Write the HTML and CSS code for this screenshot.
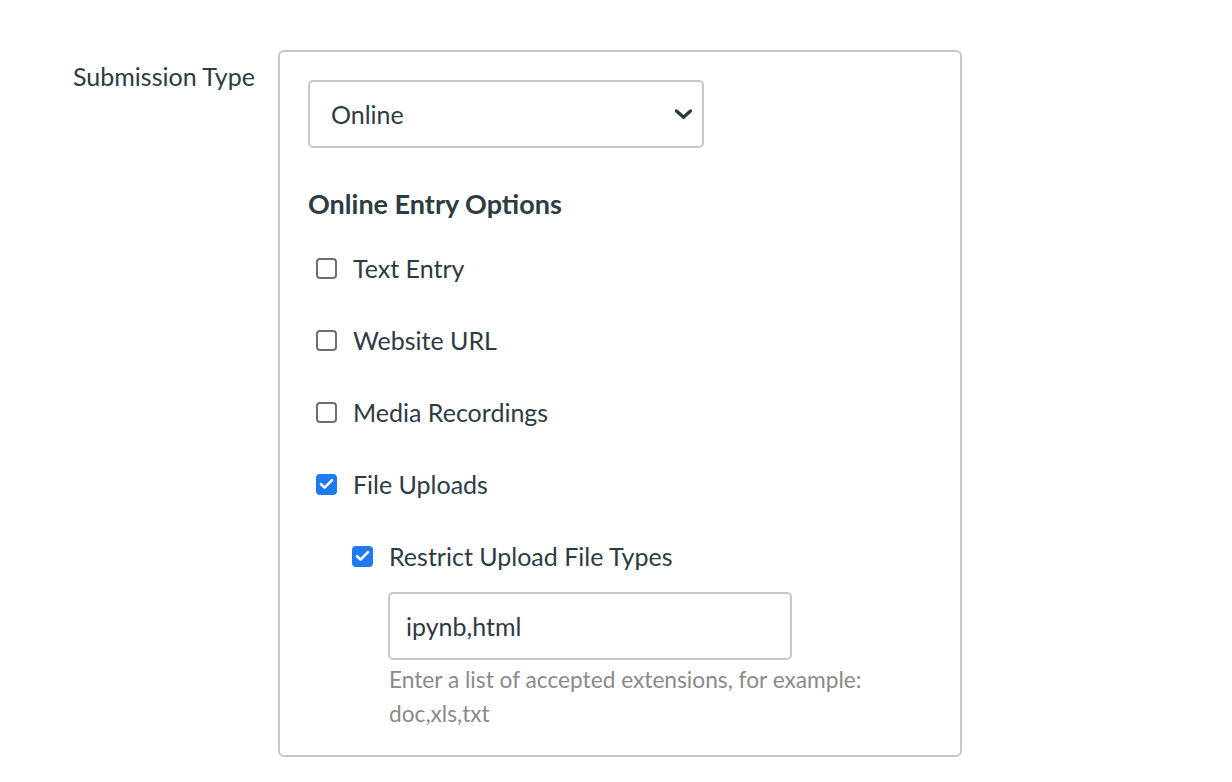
FILE: index.html
```html
<!DOCTYPE html>
<html>
<head>
<meta charset="utf-8">
<link rel="stylesheet" href="styles.css">
</head>
<body>
<div class="form-row">
  <div class="row-label">Submission Type</div>
  <div class="panel">
    <div class="select">
      <span>Online</span>
      <svg class="chev" width="19" height="12" viewBox="0 0 19 12"><path d="M2.5 3 L9.5 9.2 L16.5 3" fill="none" stroke="#2d3b45" stroke-width="3.4" stroke-linecap="round" stroke-linejoin="round"/></svg>
    </div>
    <h3 class="group-title">Online Entry Options</h3>
    <ul class="options">
      <li class="opt"><span class="box"></span><span>Text Entry</span></li>
      <li class="opt"><span class="box"></span><span>Website URL</span></li>
      <li class="opt"><span class="box"></span><span>Media Recordings</span></li>
      <li class="opt"><span class="box checked"><svg width="15" height="12" viewBox="0 0 15 12"><path d="M2 6.2 L5.6 9.6 L13 2.2" fill="none" stroke="#fff" stroke-width="2.6" stroke-linecap="round" stroke-linejoin="round"/></svg></span><span>File Uploads</span></li>
      <li class="opt sub"><span class="box checked"><svg width="15" height="12" viewBox="0 0 15 12"><path d="M2 6.2 L5.6 9.6 L13 2.2" fill="none" stroke="#fff" stroke-width="2.6" stroke-linecap="round" stroke-linejoin="round"/></svg></span><span>Restrict Upload File Types</span></li>
    </ul>
    <div class="restrict">
      <div class="text-input">ipynb,html</div>
      <p class="hint">Enter a list of accepted extensions, for example: doc,xls,txt</p>
    </div>
  </div>
</div>
</body>
</html>
```

FILE: styles.css
```css
html, body {
  margin: 0;
  padding: 0;
  background: #fff;
}
body {
  font-family: Lato, "Open Sans", sans-serif;
  color: #2d3b45;
  font-size: 25px;
}
.form-row {
  display: flex;
  padding-top: 50px;
}
.row-label {
  width: 205px;
  padding-left: 73px;
  padding-top: 11px;
  font-size: 25px;
  line-height: 30px;
  flex: none;
}
.panel {
  width: 684px;
  height: 707px;
  box-sizing: border-box;
  border: 2px solid #c8c8c8;
  border-radius: 6px;
  padding: 28px 28px;
}
.select {
  width: 396px;
  height: 68px;
  box-sizing: border-box;
  border: 2px solid #c8c8c8;
  border-radius: 5px;
  display: flex;
  align-items: center;
  justify-content: space-between;
  padding: 0 9px 0 21px;
  font-size: 25px;
}
.group-title {
  margin: 0;
  margin-top: 39px;
  font-size: 27px;
  line-height: 34px;
  font-weight: 700;
}
.options {
  list-style: none;
  margin: 0;
  padding: 0;
  margin-top: 32px;
}
.opt {
  display: flex;
  align-items: center;
  height: 30px;
  margin-bottom: 42px;
  padding-left: 8px;
  gap: 16px;
  font-size: 25px;
}
.opt.sub {
  padding-left: 44px;
  margin-bottom: 21px;
}
.box {
  width: 21px;
  height: 21px;
  box-sizing: border-box;
  border: 2px solid #6f6f6f;
  border-radius: 4px;
  background: #fff;
  flex: none;
  display: flex;
  align-items: center;
  justify-content: center;
}
.box.checked {
  background: #1f7af0;
  border-color: #1f7af0;
}
.restrict {
  padding-left: 80px;
}
.text-input {
  width: 404px;
  height: 68px;
  box-sizing: border-box;
  border: 2px solid #c8c8c8;
  border-radius: 5px;
  display: flex;
  align-items: center;
  padding-left: 16px;
  font-size: 25px;
}
.hint {
  margin: 3px 0 0 1px;
  width: 490px;
  color: #8a8a8a;
  font-size: 22.7px;
  line-height: 34px;
}
```
